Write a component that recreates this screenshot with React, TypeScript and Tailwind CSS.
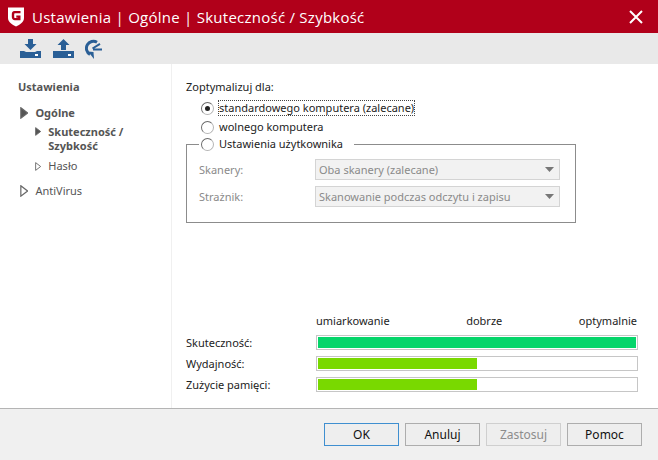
const Radio = ({ on }: { on?: boolean }) => (
  <span className="flex h-[13px] w-[13px] shrink-0 items-center justify-center rounded-full border border-[#6a6a6a] bg-white [border-bottom-color:#b5b5b5] [border-right-color:#b5b5b5]">
    {on && <span className="h-[5px] w-[5px] rounded-full bg-[#222]" />}
  </span>
);

const Tri = ({ size, solid }: { size: number; solid?: boolean }) => (
  <svg width={size * 0.7} height={size} viewBox="0 0 7 10" className="shrink-0">
    <path d="M.7.7 6.3 5 .7 9.3Z" fill={solid ? "#555" : "#fff"} stroke="#666" strokeWidth="1" />
  </svg>
);

const Select = ({ text }: { text: string }) => (
  <div className="flex h-[21px] w-[245px] items-center justify-between border border-[#d4d4d4] bg-[#f2f2f2] pl-[3px] pr-[5px] text-[#8a8a8a]">
    <span>{text}</span>
    <svg width="9" height="5" viewBox="0 0 9 5"><path d="M0 0h9L4.5 5Z" fill="#777" /></svg>
  </div>
);

const Bar = ({ label, width, color }: { label: string; width: number; color: string }) => (
  <div className="flex h-[15px] items-center">
    <span className="w-[130px] text-[#222]">{label}</span>
    <div className="h-[15px] w-[322px] border-2 border-[#c6c6c6] bg-white [border-width:1px] p-px">
      <div className="h-full" style={{ width, backgroundColor: color }} />
    </div>
  </div>
);

const Btn = ({ text, primary, disabled }: { text: string; primary?: boolean; disabled?: boolean }) => (
  <button
    className={`h-[23px] w-[75px] border bg-[#eeeeee] text-[12px] ${
      primary ? "border-[#3f8fd0] text-[#111]" : disabled ? "border-[#cfcfcf] text-[#8c8c8c]" : "border-[#adadad] text-[#111]"
    }`}
  >
    {text}
  </button>
);

export default function App() {
  return (
    <div className="flex h-[460px] w-[658px] flex-col overflow-hidden bg-white font-['Noto_Sans','DejaVu_Sans',sans-serif] text-[11px] leading-[14px]">
      <header className="flex h-[33px] shrink-0 items-center bg-[#b1001a] pl-[7px] pr-[15px] text-white">
        <svg width="18" height="21" viewBox="0 0 18 21">
          <path d="M1 1.5h16v10.5c0 4-4 6.5-8 8.5-4-2-8-4.500-8-8.500Z" fill="#fff" />
          <path d="M13.500 5H7.500C5.500 5 4.800 6.500 4.800 8.500v2.500c0 2 1.200 3.200 3 3.200h5.700V9.500H9.300v2.200h1.600v.4H8.200c-.8 0-1-.6-1-1.300V8.400c0-.8.300-1.200 1-1.200h5.300Z" fill="#b1001a" />
        </svg>
        <span className="ml-[7px] font-['Open_Sans','Noto_Sans',sans-serif] text-[15px] tracking-[0.25px]">Ustawienia | Ogólne | Skuteczność / Szybkość</span>
        <svg className="ml-auto" width="14" height="14" viewBox="0 0 14 14">
          <path d="M1 1l12 12M13 1 1 13" stroke="#fff" strokeWidth="2" />
        </svg>
      </header>

      <div className="flex h-[31px] shrink-0 items-center gap-[12px] bg-[#e9e9e9] pl-[20px]">
        <svg width="21" height="20" viewBox="0 0 21 20">
          <path d="M8 0h5v5h3.500l-6 6-6-6H8Z" fill="#2a5f96" />
          <path d="M0 12h4l2 1h9l2-1h4v7H0Z" fill="#2a5f96" />
          <rect x="15" y="15" width="3" height="2" fill="#fff" />
        </svg>
        <svg width="21" height="20" viewBox="0 0 21 20">
          <path d="M8 11V6H4.500l6-6 6 6H13v5Z" fill="#2a5f96" />
          <path d="M0 12h21v7H0Z" fill="#2a5f96" />
          <rect x="15" y="15" width="3" height="2" fill="#fff" />
        </svg>
        <svg className="-ml-[1px]" width="18" height="20" viewBox="0 0 18 20">
          <path d="M12 3.200A7 7 0 0 0 5 15.500" fill="none" stroke="#2a5f96" strokeWidth="3" />
          <path d="M3 12.500 9 20l-.5-7Z" fill="#2a5f96" />
          <path d="M7.500 9.500 15 4.800M8 10.500h9" stroke="#2a5f96" strokeWidth="2" fill="none" />
        </svg>
      </div>

      <div className="flex min-h-0 flex-1">
        <nav className="w-[172px] shrink-0 border-r border-[#f0f0f0] pt-[16px] text-[#555]">
          <div className="pl-[18px] font-bold">Ustawienia</div>
          <div className="mt-[12px] flex items-center gap-[7px] pl-[20px] font-bold">
            <Tri size={12} solid /> Ogólne
          </div>
          <div className="mt-[5px] flex items-start gap-[7px] pl-[35px] font-bold">
            <span className="mt-[2px]"><Tri size={9} solid /></span>
            <span>Skuteczność /<br />Szybkość</span>
          </div>
          <div className="mt-[6px] flex items-center gap-[7px] pl-[35px]">
            <Tri size={9} /> Hasło
          </div>
          <div className="mt-[11px] flex items-center gap-[7px] pl-[20px]">
            <Tri size={12} /> AntiVirus
          </div>
        </nav>

        <main className="min-w-0 flex-1 pl-[14px] pt-[16px] text-[#222]">
          <div>Zoptymalizuj dla:</div>
          <div className="mt-[7px] flex items-center gap-[5px] pl-[15px]">
            <Radio on />
            <span className="outline-1 outline-dotted outline-[#444]">standardowego komputera (zalecane)</span>
          </div>
          <div className="mt-[5px] flex items-center gap-[5px] pl-[15px]">
            <Radio />
            <span>wolnego komputera</span>
          </div>
          <fieldset className="mt-[3px] h-[86px] w-[390px] border border-[#8c8c8c] px-[12px]">
            <legend className="flex items-center gap-[5px] pl-[2px] pr-[11px]">
              <Radio />
              <span>Ustawienia użytkownika</span>
            </legend>
            <div className="mt-[8px] flex items-center text-[#8a8a8a]">
              <span className="w-[116px]">Skanery:</span>
              <Select text="Oba skanery (zalecane)" />
            </div>
            <div className="mt-[6px] flex items-center text-[#8a8a8a]">
              <span className="w-[116px]">Strażnik:</span>
              <Select text="Skanowanie podczas odczytu i zapisu" />
            </div>
          </fieldset>

          <div className="mt-[91px] flex w-[451px] justify-between pl-[130px]">
            <span>umiarkowanie</span>
            <span>dobrze</span>
            <span>optymalnie</span>
          </div>
          <div className="mt-[7px] flex flex-col gap-[6px]">
            <Bar label="Skuteczność:" width={318} color="#05d56a" />
            <Bar label="Wydajność:" width={159} color="#79d900" />
            <Bar label="Zużycie pamięci:" width={159} color="#79d900" />
          </div>
        </main>
      </div>

      <footer className="flex h-[52px] shrink-0 items-start justify-end gap-[6px] border-t border-[#b4b4b4] bg-[#f0f0f0] pr-[16px] pt-[14px]">
        <Btn text="OK" primary />
        <Btn text="Anuluj" />
        <Btn text="Zastosuj" disabled />
        <Btn text="Pomoc" />
      </footer>
    </div>
  );
}
